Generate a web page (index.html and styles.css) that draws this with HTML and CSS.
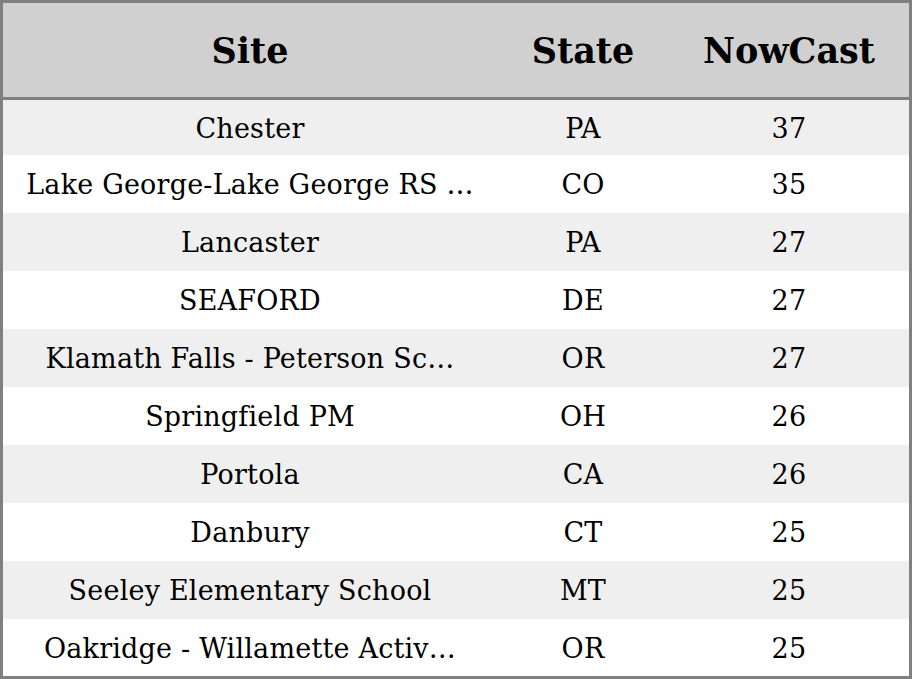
FILE: index.html
```html
<!DOCTYPE html>
<html>
<head>
<meta charset="utf-8">
<link rel="stylesheet" href="styles.css">
</head>
<body>
<div class="frame">
<table class="grid">
<colgroup><col class="c-site"><col class="c-state"><col class="c-now"></colgroup>
<thead>
<tr><th>Site</th><th>State</th><th>NowCast</th></tr>
</thead>
<tbody>
<tr class="first"><td>Chester</td><td>PA</td><td>37</td></tr>
<tr><td>Lake George-Lake George RS …</td><td>CO</td><td>35</td></tr>
<tr><td>Lancaster</td><td>PA</td><td>27</td></tr>
<tr><td>SEAFORD</td><td>DE</td><td>27</td></tr>
<tr><td>Klamath Falls - Peterson Sc…</td><td>OR</td><td>27</td></tr>
<tr><td>Springfield PM</td><td>OH</td><td>26</td></tr>
<tr><td>Portola</td><td>CA</td><td>26</td></tr>
<tr><td>Danbury</td><td>CT</td><td>25</td></tr>
<tr><td>Seeley Elementary School</td><td>MT</td><td>25</td></tr>
<tr class="last"><td>Oakridge - Willamette Activ…</td><td>OR</td><td>25</td></tr>
</tbody>
</table>
</div>
</body>
</html>
```
FILE: styles.css
```css
html, body { margin: 0; padding: 0; background: #fff; }
.frame {
  width: 912px;
  height: 679px;
  box-sizing: border-box;
  border: 3px solid #808080;
  overflow: hidden;
}
.grid {
  width: 906px;
  border-collapse: collapse;
  table-layout: fixed;
  font-family: "DejaVu Serif", serif;
  color: #000;
}
.c-site { width: 494px; }
.c-state { width: 172px; }
.c-now { width: 240px; }
.grid th {
  height: 93px;
  background: #d0d0d0;
  border-bottom: 3px solid #808080;
  font-size: 35px;
  font-weight: bold;
  text-align: center;
  padding: 1px 0 0;
}
.grid td {
  height: 58px;
  padding: 2px 0 0;
  box-sizing: border-box;
  font-size: 27px;
  letter-spacing: 0.2px;
  text-align: center;
  white-space: nowrap;
  overflow: hidden;
}
.grid tr.first td { height: 56px; }
.grid tr.last td { height: 57px; }
.grid tbody tr:nth-child(odd) td { background: #efefef; }
.grid tbody tr:nth-child(even) td { background: #fff; }
```
